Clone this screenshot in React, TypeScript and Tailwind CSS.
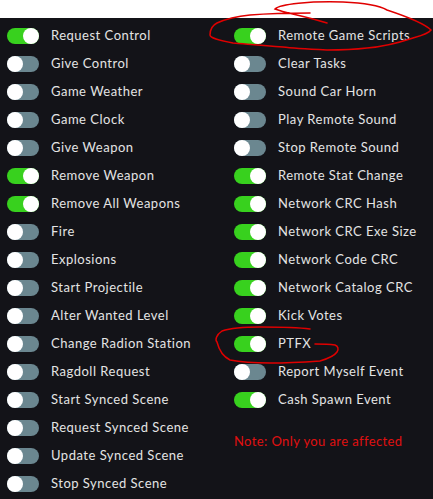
import React from "react";

const left: [string, boolean][] = [
  ["Request Control", true],
  ["Give Control", false],
  ["Game Weather", false],
  ["Game Clock", false],
  ["Give Weapon", false],
  ["Remove Weapon", true],
  ["Remove All Weapons", true],
  ["Fire", false],
  ["Explosions", false],
  ["Start Projectile", false],
  ["Alter Wanted Level", false],
  ["Change Radion Station", false],
  ["Ragdoll Request", false],
  ["Start Synced Scene", false],
  ["Request Synced Scene", false],
  ["Update Synced Scene", false],
  ["Stop Synced Scene", false],
];

const right: [string, boolean][] = [
  ["Remote Game Scripts", true],
  ["Clear Tasks", false],
  ["Sound Car Horn", false],
  ["Play Remote Sound", false],
  ["Stop Remote Sound", false],
  ["Remote Stat Change", true],
  ["Network CRC Hash", true],
  ["Network CRC Exe Size", true],
  ["Network Code CRC", true],
  ["Network Catalog CRC", true],
  ["Kick Votes", true],
  ["PTFX", true],
  ["Report Myself Event", false],
  ["Cash Spawn Event", true],
];

function Toggle({ on }: { on: boolean }) {
  return (
    <div
      className={
        "flex h-4 w-8 shrink-0 rounded-full " +
        (on ? "justify-end bg-[#38d11e]" : "justify-start bg-[#6b8790]")
      }
    >
      <div className="h-4 w-4 rounded-full bg-white" />
    </div>
  );
}

function Row({ label, on }: { label: string; on: boolean }) {
  return (
    <div className="flex h-7 items-center gap-3">
      <Toggle on={on} />
      <span className="text-[13px] tracking-[0.5px] text-[#e4e4e4]">{label}</span>
    </div>
  );
}

export default function App() {
  return (
    <div className="relative h-[499px] w-[433px] overflow-hidden bg-white font-['Lato',sans-serif]">
      <div className="mt-[18px] grid h-[481px] grid-cols-[227px_1fr] bg-[#131318] pt-[4px]">
        <div className="pl-[7px]">
          {left.map(([l, on]) => (
            <Row key={l} label={l} on={on} />
          ))}
        </div>
        <div className="pl-[7px]">
          {right.map(([l, on]) => (
            <Row key={l} label={l} on={on} />
          ))}
          <div className="mt-[14px] flex h-7 items-center text-[13px] tracking-[0.4px] text-[#e01010]">
            Note: Only you are affected
          </div>
        </div>
      </div>
      <svg className="pointer-events-none absolute left-0 top-0" width="433" height="499" fill="none">
        <path
          d="M327 23 C 305 16, 285 13, 275 9 C 280 4, 310 1, 343 2 C 365 3, 380 6, 387 10 C 405 16, 425 24, 431 30 C 428 34, 420 36, 413 38 C 395 44, 380 47, 367 48 C 350 50, 338 50, 327 50 C 305 49, 290 48, 283 47 C 260 45, 245 44, 233 43 C 218 40, 210 38, 210 35 C 210 28, 213 25, 217 23 C 228 18, 240 16, 250 15 C 275 13, 295 13, 310 13"
          stroke="#e00000"
          strokeWidth="1.5"
          strokeLinecap="round"
        />
        <path
          d="M310 329 C 295 327, 275 327, 260 327 C 240 327, 228 329, 222 331 C 216 335, 215 340, 217 342 C 219 350, 224 357, 230 360 C 245 363, 258 363, 270 363 C 290 363, 305 362, 320 361 C 330 358, 335 355, 337 352 C 339 349, 338 346, 335 345 C 328 344, 322 344, 315 344"
          stroke="#e00000"
          strokeWidth="1.5"
          strokeLinecap="round"
        />
      </svg>
    </div>
  );
}
